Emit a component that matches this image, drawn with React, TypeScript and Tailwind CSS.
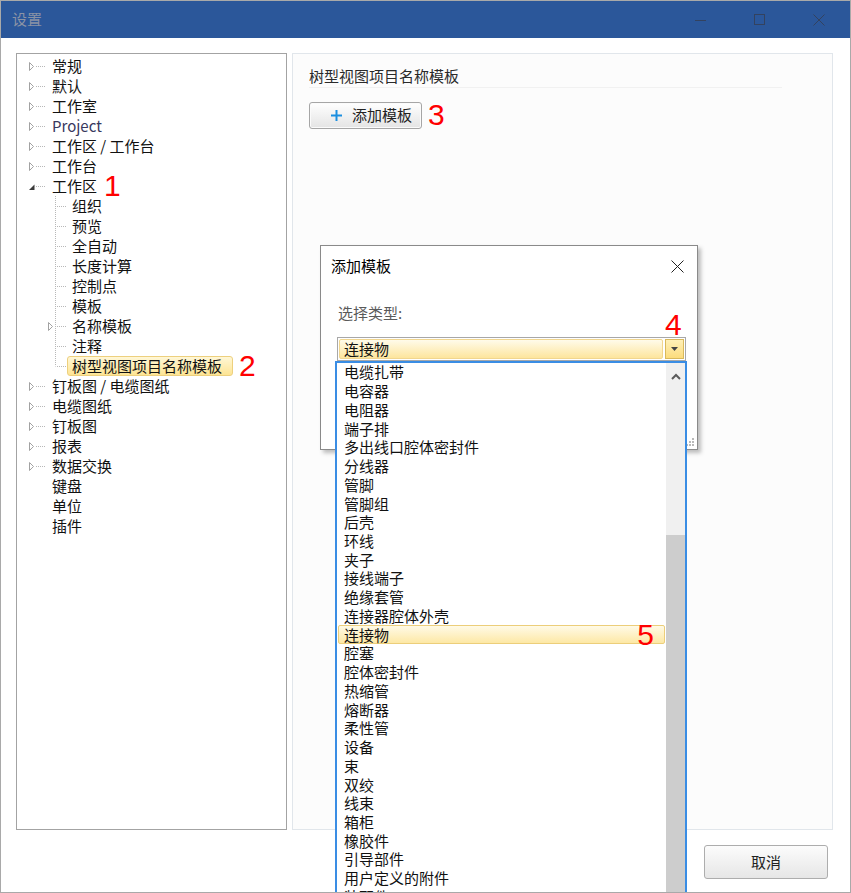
import React from "react";

type Node = {
  label: string;
  level: 0 | 1;
  kind: "collapsed" | "expanded" | "none";
  selected?: boolean;
  last?: boolean;
  mark?: string;
  tint?: boolean;
};

const tree: Node[] = [
  { label: "常规", level: 0, kind: "collapsed" },
  { label: "默认", level: 0, kind: "collapsed" },
  { label: "工作室", level: 0, kind: "collapsed" },
  { label: "Project", level: 0, kind: "collapsed", tint: true },
  { label: "工作区 / 工作台", level: 0, kind: "collapsed" },
  { label: "工作台", level: 0, kind: "collapsed" },
  { label: "工作区", level: 0, kind: "expanded", mark: "1" },
  { label: "组织", level: 1, kind: "none" },
  { label: "预览", level: 1, kind: "none" },
  { label: "全自动", level: 1, kind: "none" },
  { label: "长度计算", level: 1, kind: "none" },
  { label: "控制点", level: 1, kind: "none" },
  { label: "模板", level: 1, kind: "none" },
  { label: "名称模板", level: 1, kind: "collapsed" },
  { label: "注释", level: 1, kind: "none" },
  { label: "树型视图项目名称模板", level: 1, kind: "none", selected: true, last: true, mark: "2" },
  { label: "钉板图 / 电缆图纸", level: 0, kind: "collapsed" },
  { label: "电缆图纸", level: 0, kind: "collapsed" },
  { label: "钉板图", level: 0, kind: "collapsed" },
  { label: "报表", level: 0, kind: "collapsed" },
  { label: "数据交换", level: 0, kind: "collapsed" },
  { label: "键盘", level: 0, kind: "none" },
  { label: "单位", level: 0, kind: "none" },
  { label: "插件", level: 0, kind: "none" },
];

const types = [
  "电缆扎带", "电容器", "电阻器", "端子排", "多出线口腔体密封件", "分线器", "管脚", "管脚组",
  "后壳", "环线", "夹子", "接线端子", "绝缘套管", "连接器腔体外壳", "连接物", "腔塞",
  "腔体密封件", "热缩管", "熔断器", "柔性管", "设备", "束", "双绞", "线束", "箱柜",
  "橡胶件", "引导部件", "用户定义的附件", "装配件",
];

const Mark = ({ n, className }: { n: string; className?: string }) => (
  <span className={`font-['Liberation_Sans',sans-serif] text-[30px] leading-none text-[#ff0000] ${className ?? ""}`}>
    {n}
  </span>
);

const Connector = ({ node }: { node: Node }) => {
  if (node.level === 0) {
    if (node.kind === "none") return <div className="w-[29px] shrink-0" />;
    return (
      <svg width="29" height="20" className="shrink-0">
        {node.kind === "collapsed" ? (
          <polygon points="11.5,6.5 11.5,14.5 15.5,10.5" fill="#fff" stroke="#a2a2a2" />
        ) : (
          <polygon points="11,14 16.5,14 16.5,8.5" fill="#3a3a3a" />
        )}
        <line x1="18" y1="10.5" x2="28" y2="10.5" stroke="#b8b8b8" strokeDasharray="1 1" />
      </svg>
    );
  }
  return (
    <svg width="49" height="20" className="shrink-0">
      <line x1="37.5" y1="0" x2="37.5" y2={node.last ? 10.5 : 20} stroke="#b8b8b8" strokeDasharray="1 1" />
      <line x1="39" y1="10.5" x2="49" y2="10.5" stroke="#b8b8b8" strokeDasharray="1 1" />
      {node.kind === "collapsed" && (
        <polygon points="30.5,6.5 30.5,14.5 34.5,10.5" fill="#fff" stroke="#a2a2a2" />
      )}
    </svg>
  );
};

const App = () => {
  return (
    <div className="relative w-[851px] h-[893px] overflow-hidden bg-white border border-[#a9a9a9] font-['Noto_Sans_CJK_SC',sans-serif] text-[15px] text-[#111]">
      {/* title bar */}
      <div className="h-[37px] bg-[#2b579a] flex items-center pl-[11px]">
        <span className="text-[15px] text-[#8a93a5] flex-1">设置</span>
        <div className="flex items-center h-full">
          <div className="w-[58px] h-full flex items-center justify-center">
            <svg width="12" height="12"><line x1="0" y1="6.5" x2="11" y2="6.5" stroke="#33425f" /></svg>
          </div>
          <div className="w-[60px] h-full flex items-center justify-center">
            <svg width="12" height="12"><rect x="0.5" y="0.5" width="10" height="10" fill="none" stroke="#33425f" /></svg>
          </div>
          <div className="w-[58px] h-full flex items-center justify-center mr-[2px]">
            <svg width="12" height="12"><path d="M0.5 0.5 L11.5 11.5 M11.5 0.5 L0.5 11.5" stroke="#33425f" /></svg>
          </div>
        </div>
      </div>

      {/* body */}
      <div className="flex gap-[5px] pl-[15px] pt-[15px]">
        <div className="w-[271px] h-[777px] border border-[#a3a3a3] pt-[2px] pl-[1px]">
          {tree.map((n) => (
            <div key={n.label} className="flex items-center h-[20px]">
              <Connector node={n} />
              <span
                className={`h-[20px] leading-[18px] flex items-center pl-[4px] border rounded-[3px] whitespace-nowrap ${
                  n.selected
                    ? "pr-[10px] border-[#edd07e] bg-gradient-to-b from-[#fff7d6] to-[#fde493]"
                    : "pr-[4px] border-transparent"
                } ${n.tint ? "text-[#38385e]" : ""}`}
              >
                {n.label}
              </span>
              {n.mark && <Mark n={n.mark} className={n.selected ? "ml-[6px]" : "ml-[2px]"} />}
            </div>
          ))}
        </div>

        <div className="w-[541px] h-[777px] border border-[#e1e6eb] bg-[#fcfcfc] pl-[16px] pt-[12px]">
          <div className="h-[22px] flex items-center text-[#2a2a2a] border-b border-[#f1f1f1] mr-[50px]">
            树型视图项目名称模板
          </div>
          <div className="flex items-center mt-[12px]">
            <button className="w-[113px] h-[27px] border border-[#a6a6a6] rounded-[3px] bg-gradient-to-b from-[#ffffff] to-[#e4e4e4] shadow-[inset_0_0_0_1px_#fbfbfb] flex items-center pl-[20px] gap-[9px] text-[#222]">
              <svg width="13" height="13">
                <path d="M6.5 1 V12 M1 6.5 H12" stroke="#1c8fe0" strokeWidth="2" />
              </svg>
              <span>添加模板</span>
            </button>
            <Mark n="3" className="ml-[6px]" />
          </div>
        </div>
      </div>

      {/* footer */}
      <div className="flex justify-end pt-[15px] pr-[22px]">
        <button className="w-[124px] h-[34px] border border-[#adadad] rounded-[3px] bg-gradient-to-b from-[#fcfcfc] to-[#e6e6e6] text-[#222]">
          取消
        </button>
      </div>

      {/* add template dialog */}
      <div className="absolute left-[319px] top-[244px] w-[378px] h-[205px] bg-white border border-[#8a8a8a] shadow-[3px_3px_4px_rgba(0,0,0,0.25)]">
        <div className="h-[40px] flex items-center justify-between pl-[10px] pr-[13px] text-black">
          <span>添加模板</span>
          <svg width="13" height="13">
            <path d="M0.5 0.5 L12.5 12.5 M12.5 0.5 L0.5 12.5" stroke="#222" />
          </svg>
        </div>
        <div className="pl-[17px] mt-[17px] h-[20px] flex items-center text-[#5a5a5a]">选择类型:</div>
        <div className="ml-[16px] mt-[14px] w-[349px] h-[24px] border border-[#a8a8a8] flex items-center p-[1px] gap-[2px]">
          <div className="flex-1 h-full leading-[18px] rounded-[2px] border border-[#f1d68f] bg-gradient-to-b from-[#fffbea] to-[#fde59c] flex items-center pl-[4px]">
            连接物
          </div>
          <div className="w-[19px] h-full border border-[#d9b95c] bg-gradient-to-b from-[#fff0b8] to-[#fcdc7c] flex items-center justify-center">
            <svg width="7" height="4"><polygon points="0,0 7,0 3.5,4" fill="#444" /></svg>
          </div>
        </div>
        <Mark n="4" className="absolute left-[344px] top-[64px]" />
        <svg width="10" height="10" className="absolute right-[2px] bottom-[2px]">
          <g fill="#b9b9b9">
            <rect x="7" y="1" width="2" height="2" />
            <rect x="4" y="4" width="2" height="2" />
            <rect x="7" y="4" width="2" height="2" />
            <rect x="1" y="7" width="2" height="2" />
            <rect x="4" y="7" width="2" height="2" />
            <rect x="7" y="7" width="2" height="2" />
          </g>
        </svg>
      </div>

      {/* dropdown list */}
      <div className="absolute left-[334px] top-[360px] w-[352px] h-[560px] bg-white border-2 border-[#3a8de4] flex">
        <div className="flex-1 pl-[1px]">
          {types.map((t) => {
            const sel = t === "连接物";
            return (
              <div
                key={t}
                className={`h-[18.74px] leading-[16px] flex items-center justify-between pl-[5px] pr-[10px] border rounded-[2px] whitespace-nowrap ${
                  sel ? "border-[#ecce7a] bg-gradient-to-b from-[#fffae6] to-[#fde8a5]" : "border-transparent"
                }`}
              >
                <span className="leading-[16px]">{t}</span>
                {sel && <Mark n="5" />}
              </div>
            );
          })}
        </div>
        <div className="w-[19px] bg-[#f0f0f0] flex flex-col ml-[1px]">
          <div className="h-[30px] flex items-start justify-center pt-[10px]">
            <svg width="10" height="7"><path d="M1 6 L5 2 L9 6" stroke="#5a5a5a" strokeWidth="2" fill="none" /></svg>
          </div>
          <div className="h-[142px]" />
          <div className="flex-1 bg-[#cdcdcd]" />
        </div>
      </div>
    </div>
  );
};

export default App;
